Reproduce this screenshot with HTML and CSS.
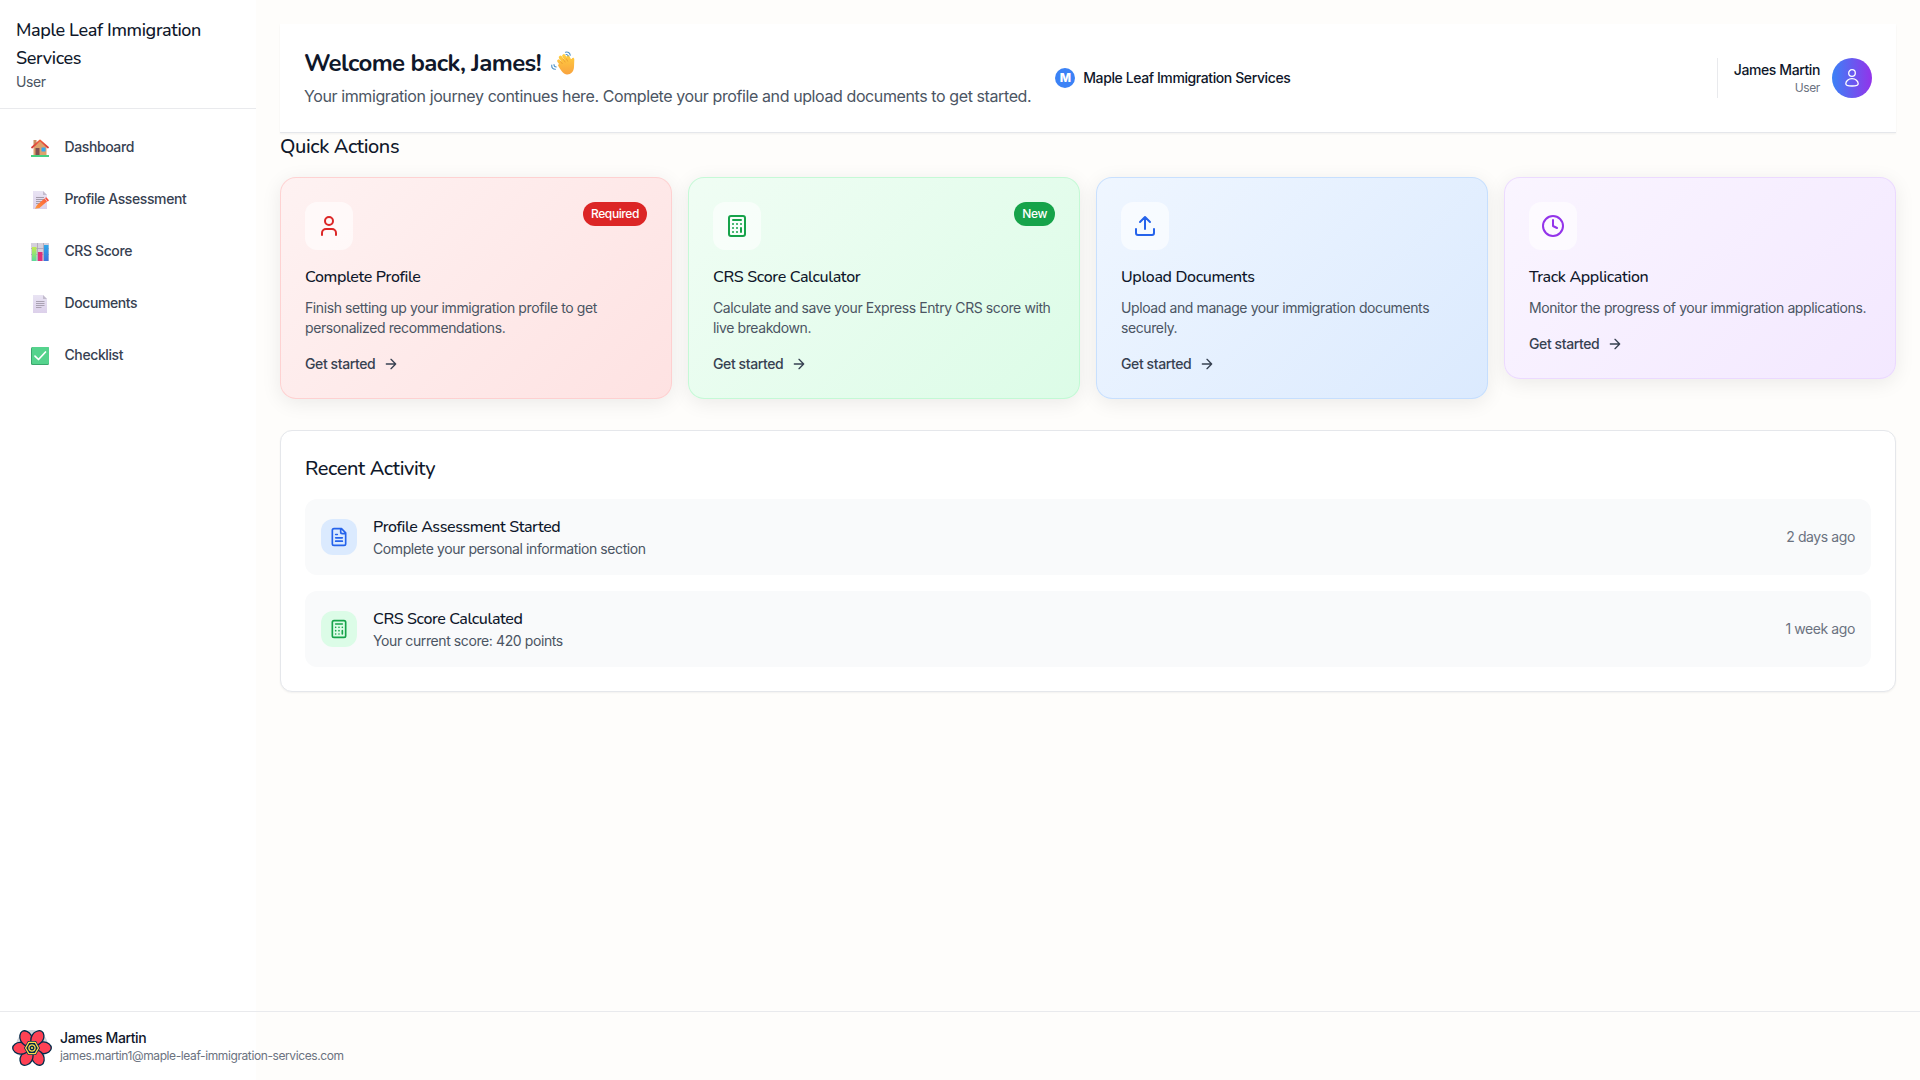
FILE: index.html
```html
<!DOCTYPE html>
<html lang="en">
<head>
<meta charset="utf-8">
<title>Maple Leaf Immigration Services</title>
<link rel="stylesheet" href="styles.css">
</head>
<body>
<svg width="0" height="0" class="defs" aria-hidden="true">
  <defs>
    <linearGradient id="roof" x1="0" y1="0" x2="0" y2="1"><stop offset="0" stop-color="#f0643c"/><stop offset="1" stop-color="#d63a3a"/></linearGradient>
    <linearGradient id="paper" x1="0" y1="0" x2="0" y2="1"><stop offset="0" stop-color="#e9e4f3"/><stop offset="1" stop-color="#dcd0ea"/></linearGradient>
    <linearGradient id="bar1" x1="0" y1="0" x2="0" y2="1"><stop offset="0" stop-color="#c3ea52"/><stop offset="1" stop-color="#5bdc9a"/></linearGradient>
    <linearGradient id="bar3" x1="0" y1="0" x2="0" y2="1"><stop offset="0" stop-color="#2fa8e8"/><stop offset="1" stop-color="#3d74dd"/></linearGradient>
    <linearGradient id="pencil" x1="1" y1="0" x2="0" y2="1"><stop offset="0" stop-color="#fb5a3c"/><stop offset="1" stop-color="#ff9a3d"/></linearGradient>
    <linearGradient id="hand" gradientUnits="userSpaceOnUse" x1="0" y1="3" x2="0" y2="24"><stop offset="0" stop-color="#ffcf3f"/><stop offset="1" stop-color="#f9a23f"/></linearGradient>
    <symbol id="calculator" viewBox="0 0 24 24"><rect x="4" y="2" width="16" height="20" rx="2"/><path d="M8 6h8M16 14v4M16 10h.01M12 10h.01M8 10h.01M12 14h.01M8 14h.01M12 18h.01M8 18h.01"/></symbol>
    <symbol id="arrow" viewBox="0 0 24 24"><path d="M5 12h14M12 5l7 7-7 7"/></symbol>
    <path id="petal" d="M2 0C4-4.500 7.500-6.200 11.500-6.200 15.500-6.200 19.300-3 19.300 0S15.500 5.800 11.500 5.600C8 5.400 5 3.600 2 0Z"/>
  </defs>
</svg>
<div class="app">
  <aside class="sidebar">
    <div class="brand">
      <h1 class="brand-name">Maple Leaf Immigration Services</h1>
      <p class="brand-role">User</p>
    </div>
    <nav class="nav">
      <a class="nav-item"><svg class="emoji" viewBox="0 0 18 18"><path fill="#c98f63" d="M2.500 1h3v6h-3z"/><path fill="#dda26c" d="M2.500 8 9 2l6.500 6v8.500h-13z"/><path fill="#815050" d="M4.500 9h4v7h-4z"/><path fill="#35a9ee" d="M10.500 8.500h4v4h-4z"/><path fill="none" stroke="url(#roof)" stroke-width="1.700" stroke-linecap="round" stroke-linejoin="round" d="M1 8.500 9 1.300l8 7.200"/><path fill="#48d080" d="M0 16h18v2H0z"/></svg>Dashboard</a>
      <a class="nav-item"><svg class="emoji" viewBox="0 0 18 18"><path fill="url(#paper)" d="M2 0h10l4 4v14H2z"/><path fill="#c3bccd" d="M12 0l4 4h-4z"/><path stroke="#a49dab" d="M5 6.500h8M5 8.500h8M5 10.500h6M5 12.500h4"/><path fill="url(#pencil)" d="m6 14 7.500-6.500 2.500 3L8.500 17l-4.500.7z"/><path fill="#fb4f3e" d="m14 7 1.300-.7 2.700 3-1.200 1.400z"/></svg>Profile Assessment</a>
      <a class="nav-item"><svg class="emoji" viewBox="0 0 18 18"><path fill="#d5d0dc" d="M0 0h18v18H0z"/><path stroke="#aaa2b5" stroke-width=".8" d="M0 5.500h18M0 11.500h18M6.500 0v18M12.500 0v18"/><path fill="url(#bar1)" d="M1 4h4.500v14H1z"/><path fill="#df3179" d="M7 9h4.500v9H7z"/><path fill="url(#bar3)" d="M13 2h4.500v16H13z"/></svg>CRS Score</a>
      <a class="nav-item"><svg class="emoji" viewBox="0 0 18 18"><path fill="url(#paper)" d="M2 0h10l4 4v14H2z"/><path fill="#c3bccd" d="M12 0l4 4h-4z"/><path stroke="#aaa2b2" d="M5 6.500h8.500M5 8.500h8.500M5 10.500h8.500M5 12.500h5.500"/></svg>Documents</a>
      <a class="nav-item"><svg class="emoji" viewBox="0 0 18 18"><rect width="18" height="18" rx="1.500" fill="#39a66c"/><rect x="1" width="17" height="17" rx="1" fill="#55d38d"/><path fill="none" stroke="#fff" stroke-width="1.700" stroke-linecap="round" stroke-linejoin="round" d="m4 9.200 3.500 3.300L14.500 5"/></svg>Checklist</a>
    </nav>
  </aside>

  <main class="main">
    <header class="header">
      <div class="welcome">
        <h2 class="welcome-title">Welcome back, James! <svg class="wave" viewBox="0 0 24 24"><g fill="none" stroke="url(#hand)" stroke-width="3.300" stroke-linecap="round"><path d="m7.800 10 4 5"/><path d="m9.400 6.300 5 6.700"/><path d="m12.800 4.800 4.500 7"/><path d="m17 6 3 6"/></g><path fill="url(#hand)" d="m7 14.500 2-4L20.500 8c1-1.700 2.700-2 2.800.5L23 16c-.3 5-3.300 7.600-7 7.400-3.600-.2-5.600-3-9-8.900z"/><path stroke="#e08a2c" stroke-width=".6" d="m9.500 10.500 2 2.500M12.300 8.300l2 3M15.300 7.500l1.500 3"/><path fill="none" stroke="#4d93c9" stroke-width="1.100" stroke-linecap="round" d="M14.500 1.300c2.400-.9 4.300.5 4.800 3M15 3.500c1.100-.2 1.800.4 2.200 1.400M.8 14c-.4 2.600 1 4.300 3.600 4.300M3 13.500c-.1 1.400.7 2.300 2.300 2.500"/></svg></h2>
        <p class="welcome-text">Your immigration journey continues here. Complete your profile and upload documents to get started.</p>
      </div>
      <div class="firm"><span class="firm-mark">M</span><span>Maple Leaf Immigration Services</span></div>
      <div class="account">
        <div class="account-text"><p class="account-name">James Martin</p><p class="account-role">User</p></div>
        <div class="account-avatar"><svg width="20" height="20" viewBox="0 0 20 20" fill="none" stroke="#fff" stroke-width="1.300"><circle cx="10" cy="5" r="3.300"/><path d="M10 10.700c-3.600 0-6.200 2.400-6.200 5.100 0 1.500 2.800 2.200 6.200 2.200s6.200-.7 6.200-2.200c0-2.700-2.600-5.100-6.200-5.100Z"/></svg></div>
      </div>
    </header>

    <h2 class="section-title">Quick Actions</h2>
    <section class="cards">
      <article class="card red">
        <div class="card-top"><span class="card-icon"><svg class="icon" viewBox="0 0 24 24"><path d="M19 21v-2a4 4 0 0 0-4-4H9a4 4 0 0 0-4 4v2"/><circle cx="12" cy="7" r="4"/></svg></span><span class="badge">Required</span></div>
        <h3 class="card-title">Complete Profile</h3>
        <p class="card-text">Finish setting up your immigration profile to get personalized recommendations.</p>
        <a class="card-link">Get started<svg class="arrow"><use href="#arrow"/></svg></a>
      </article>
      <article class="card green">
        <div class="card-top"><span class="card-icon"><svg class="icon"><use href="#calculator"/></svg></span><span class="badge">New</span></div>
        <h3 class="card-title">CRS Score Calculator</h3>
        <p class="card-text">Calculate and save your Express Entry CRS score with live breakdown.</p>
        <a class="card-link">Get started<svg class="arrow"><use href="#arrow"/></svg></a>
      </article>
      <article class="card blue">
        <div class="card-top"><span class="card-icon"><svg class="icon" viewBox="0 0 24 24"><path d="M21 15v4a2 2 0 0 1-2 2H5a2 2 0 0 1-2-2v-4M17 8l-5-5-5 5M12 3v12"/></svg></span></div>
        <h3 class="card-title">Upload Documents</h3>
        <p class="card-text">Upload and manage your immigration documents securely.</p>
        <a class="card-link">Get started<svg class="arrow"><use href="#arrow"/></svg></a>
      </article>
      <article class="card purple">
        <div class="card-top"><span class="card-icon"><svg class="icon" viewBox="0 0 24 24"><circle cx="12" cy="12" r="10"/><path d="M12 6v6l4 2"/></svg></span></div>
        <h3 class="card-title">Track Application</h3>
        <p class="card-text">Monitor the progress of your immigration applications.</p>
        <a class="card-link">Get started<svg class="arrow"><use href="#arrow"/></svg></a>
      </article>
    </section>

    <section class="activity">
      <h2 class="activity-heading">Recent Activity</h2>
      <div class="activity-list">
        <div class="row">
          <span class="row-icon doc"><svg class="row-svg" viewBox="0 0 24 24"><path d="M15 2H6a2 2 0 0 0-2 2v16a2 2 0 0 0 2 2h12a2 2 0 0 0 2-2V7ZM14 2v4a2 2 0 0 0 2 2h4M16 13H8M16 17H8M10 9H8"/></svg></span>
          <div class="row-body"><h3 class="row-title">Profile Assessment Started</h3><p class="row-text">Complete your personal information section</p></div>
          <span class="row-time">2 days ago</span>
        </div>
        <div class="row">
          <span class="row-icon score"><svg class="row-svg"><use href="#calculator"/></svg></span>
          <div class="row-body"><h3 class="row-title">CRS Score Calculated</h3><p class="row-text">Your current score: 420 points</p></div>
          <span class="row-time">1 week ago</span>
        </div>
      </div>
    </section>
  </main>
</div>

<footer class="userbar">
  <span class="userbar-avatar"></span>
  <div><p class="userbar-name">James Martin</p><p class="userbar-mail">james.martin1@maple-leaf-immigration-services.com</p></div>
</footer>
<div class="flower">
  <svg width="40" height="40" viewBox="-20 -20 40 40">
    <g fill="#ff4154" stroke="#002c4b" stroke-width="1.300">
      <use href="#petal" transform="rotate(0)"/><use href="#petal" transform="rotate(60)"/><use href="#petal" transform="rotate(120)"/><use href="#petal" transform="rotate(180)"/><use href="#petal" transform="rotate(240)"/><use href="#petal" transform="rotate(300)"/>
    </g>
    <path fill="#002c4b" d="M-4-7h8L8 0 4 7h-8L-8 0Z"/>
    <g fill="none" stroke="#ffd94c" stroke-linejoin="round">
      <path stroke-width="1.300" d="M-3.200-5.600h6.400L6.400 0 3.200 5.600h-6.400L-6.400 0Z"/>
      <circle r="3.100" stroke-width="1.300"/>
    </g>
    <circle r="1.100" fill="#ffd94c"/>
  </svg>
</div>
</body>
</html>
```
FILE: styles.css
```css
*, *::before, *::after { box-sizing: border-box; margin: 0; padding: 0; }

body {
  height: 1080px;
  overflow: hidden;
  background: #fefdfb;
  color: #0f172a;
  font-family: Inter, "Liberation Sans", sans-serif;
  font-size: 16px;
  line-height: 24px;
  letter-spacing: -0.4px;
}

h1, h2, h3 {
  font-family: Nunito, Lato, "Open Sans", sans-serif;
  font-weight: 500;
}

.defs { position: absolute; }
.app { display: flex; height: 1080px; }

/* Sidebar */
.sidebar { width: 256px; flex: none; background: #fff; }
.brand { padding: 16px; border-bottom: 1px solid #e9eaed; }
.brand-name { font-size: 18px; line-height: 28px; letter-spacing: -0.36px; }
.brand-role { font-size: 14px; line-height: 20px; color: #4b5563; }
.nav { display: flex; flex-direction: column; gap: 8px; padding: 16px; }
.nav-item { display: flex; align-items: center; gap: 15.5px; height: 44px; padding: 0 15px; font-size: 14px; font-weight: 450; color: #374151; }
.emoji { width: 18px; height: 18px; margin-top: 2px; flex: none; }

/* Main column */
.main { flex: 1; padding: 24px; }
.header { display: flex; align-items: center; gap: 24px; padding: 24px; background: #fff; border-bottom: 1px solid #e5e7eb; box-shadow: 0 1px 2px rgba(0, 0, 0, .05); }
.welcome-title { display: flex; align-items: center; gap: 10px; height: 32px; margin: -1px 0 5px; font-size: 24px; line-height: 32px; font-weight: 700; letter-spacing: -0.6px; }
.wave { width: 24px; height: 24px; }
.welcome-text { color: #4b5563; white-space: nowrap; }
.firm { display: flex; align-items: center; gap: 8px; font-size: 14px; font-weight: 500; line-height: 20px; }
.firm-mark { width: 20px; height: 20px; border-radius: 50%; background: #3b82f6; color: #fff; font-size: 12px; font-weight: 800; text-align: center; }
.account { display: flex; align-items: center; gap: 12px; margin-left: auto; padding-left: 16px; border-left: 1px solid #e9eaed; }
.account-text { text-align: right; }
.account-name { font-size: 14px; line-height: 20px; font-weight: 500; }
.account-role { font-size: 12px; line-height: 16px; color: #6b7280; }
.account-avatar { display: grid; place-items: center; width: 40px; height: 40px; border-radius: 50%; background: linear-gradient(90deg, #3b82f6, #9333ea); }
.section-title { margin-bottom: 16px; font-size: 20px; line-height: 28px; }

/* Quick action cards */
.cards { display: grid; grid-template-columns: repeat(4, 1fr); gap: 16px; align-items: start; margin-top: -0.4px; }
.card { padding: 24px; border: 1px solid; border-radius: 16px; box-shadow: 0 4px 20px rgba(0, 0, 0, .08); }
.red { background: linear-gradient(135deg, #fef2f2, #fee2e2) border-box; border-color: rgba(254, 202, 202, .8); }
.green { background: linear-gradient(135deg, #f0fdf4, #dcfce7) border-box; border-color: rgba(187, 247, 208, .8); }
.blue { background: linear-gradient(135deg, #eff6ff, #dbeafe) border-box; border-color: rgba(191, 219, 254, .8); }
.purple { background: linear-gradient(135deg, #faf5ff, #f3e8ff) border-box; border-color: rgba(233, 213, 255, .8); }
.card-top { display: flex; justify-content: space-between; align-items: flex-start; margin-bottom: 16px; }
.card-icon { display: grid; place-items: center; width: 48px; height: 48px; border-radius: 12px; background: rgba(255, 255, 255, .6); }
.icon { width: 24px; height: 24px; }
.icon, .arrow, .row-svg { fill: none; stroke: currentColor; stroke-width: 2; stroke-linecap: round; stroke-linejoin: round; }
.red .card-icon { color: #dc2626; }
.green .card-icon { color: #16a34a; }
.blue .card-icon { color: #2563eb; }
.purple .card-icon { color: #9333ea; }
.badge { padding: 4px 8px; border-radius: 12px; color: #fff; font-size: 12px; line-height: 16px; font-weight: 550; }
.red .badge { background: #dc2626; }
.green .badge { background: #16a34a; }
.card-title { margin: -1px 0 9px; font-size: 16px; line-height: 24px; letter-spacing: -0.35px; }
.card-text { margin-bottom: 16px; font-size: 14px; line-height: 20px; color: #4b5563; }
.card-link { display: flex; align-items: center; gap: 8px; font-size: 14px; line-height: 20px; font-weight: 450; color: #374151; }
.arrow { width: 16px; height: 16px; }

/* Recent activity */
.activity { margin-top: 31.4px; padding: 24px; background: #fff; border: 1px solid #e5e7eb; border-radius: 12px; box-shadow: 0 1px 2px rgba(0, 0, 0, .05); }
.activity-heading { margin-bottom: 16px; font-size: 20px; line-height: 28px; }
.activity-list { display: flex; flex-direction: column; gap: 16px; }
.row { display: flex; align-items: center; gap: 16px; padding: 16px; border-radius: 12px; background: #f9fafb; }
.row-icon { display: grid; place-items: center; width: 36px; height: 36px; border-radius: 12px; }
.doc { background: #dbeafe; color: #2563eb; }
.score { background: #dcfce7; color: #16a34a; }
.row-svg { width: 20px; height: 20px; }
.row-body { flex: 1; }
.row-title { font-size: 16px; line-height: 24px; }
.row-text { font-size: 14px; line-height: 20px; color: #4b5563; }
.row-time { font-size: 14px; line-height: 20px; color: #6b7280; }

/* Bottom user bar, over the sidebar and main column */
.userbar { position: absolute; left: 0; right: 0; bottom: 0; display: flex; align-items: center; gap: 12px; padding: 16px; border-top: 1px solid #e9eaed; }
.userbar-avatar { width: 32px; height: 32px; border-radius: 50%; background: #d1d5db; }
.userbar-name { font-size: 14px; line-height: 20px; font-weight: 500; }
.userbar-mail { font-size: 12px; line-height: 16px; color: #6b7280; }
.flower { position: absolute; left: 12px; bottom: 12px; height: 40px; }
```
